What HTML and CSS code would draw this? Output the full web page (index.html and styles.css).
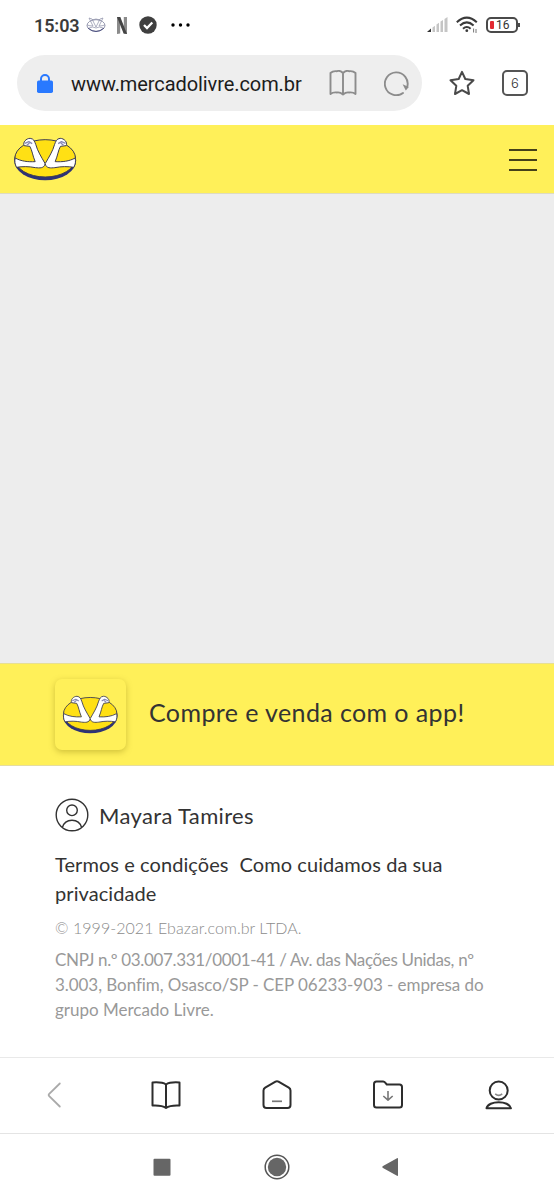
FILE: index.html
```html
<!DOCTYPE html>
<html lang="pt-BR">
<head>
<meta charset="utf-8">
<title>Mercado Livre</title>
<link rel="stylesheet" href="styles.css">
</head>
<body>
<svg class="defs" aria-hidden="true">
  <symbol id="logo" viewBox="40 50 194 132">
    <ellipse cx="136" cy="120" rx="93" ry="60" fill="#2d3277"/>
    <ellipse cx="136" cy="114" rx="91" ry="56" fill="#ffe014" stroke="#3d3c50" stroke-width="3"/>
    <g fill="#fff" stroke="#3d3c50" stroke-width="3" stroke-linejoin="round">
      <path d="M46 113C64 123 84 125 106 124C98 105 97 90 90 78L73 76C68 66 79 54 91 54C102 55 104 63 108 73C113 92 124 109 136 130C133 145 119 143 107 142C87 138 68 138 50 141C45 131 44 124 46 113Z"/>
      <path d="M226 113C208 123 188 125 166 124C174 105 175 90 182 78L199 76C204 66 193 54 181 54C170 55 168 63 164 73C159 92 148 109 136 130C139 145 153 143 165 142C185 138 204 138 222 141C227 131 228 124 226 113Z"/>
      <path d="M75 69L87 64L97 70M81 75L89 68M197 69L185 64L175 70M191 75L183 68" fill="none" stroke="#8587b5" stroke-width="4"/>
    </g>
  </symbol>
</svg>

<header class="status">
  <span class="clock">15:03</span>
  <svg class="mini-logo" viewBox="0 0 20 16" fill="none" stroke="#8a8da6" stroke-width=".9"><ellipse cx="10" cy="8.5" rx="9" ry="5.8"/><path d="M1 8Q4 9 7 9L4 3L3 1L6 2L10 10L14 2L17 1L16 3L13 9Q16 9 19 8M3 11Q7 9 10 11Q13 9 17 11M6 3Q10 1 14 3" stroke-width=".7"/><path d="M2 11Q10 18 18 11" stroke="#4b4f80" stroke-width="1"/></svg>
  <svg class="n-icon" viewBox="0 0 10 17"><path d="M0 0H3.2V16.5L0 17ZM6.8 0H10V17L6.8 16.5Z" fill="#8b8b8b"/><path d="M0 0H3.3L10 17L6.6 16.5Z" fill="#444"/></svg>
  <svg class="check" viewBox="0 0 18 18"><circle cx="9" cy="9" r="8.7" fill="#3f3f3f"/><path d="M5 9L8 12L13.3 6.5" fill="none" stroke="#fff" stroke-width="2.3"/></svg>
  <svg class="dots" viewBox="0 0 20 4"><circle cx="2" cy="2" r="1.7"/><circle cx="9.5" cy="2" r="1.7"/><circle cx="17" cy="2" r="1.7"/></svg>
  <span class="spacer"></span>
  <svg class="signal" viewBox="0 0 21 16"><path d="M0 15L4 11.5V15Z" fill="#333"/><path d="M5.5 10.5L8 8.7V15H5.5ZM9.5 7.6L12 5.8V15H9.5ZM13.5 4.6L16 3V15H13.5ZM17.5 2L20.5 0V15H17.5Z" fill="#c5c5c5"/></svg>
  <svg class="wifi" viewBox="0 0 22 18" fill="none" stroke="#3b3b3b" stroke-width="2"><path d="M.8 6.2Q10.8-3 20.8 6.2M4 9.5Q10.8 3.2 17.6 9.5M7 12.7Q10.8 9.3 14.6 12.7"/><circle cx="10.8" cy="14.7" r="1.4" fill="#3b3b3b" stroke="none"/><path d="M17.6 12.5V16.5M20 13V17" stroke-width="1" stroke="#777"/></svg>
  <span class="battery"><i class="charge"></i>16</span>
</header>

<div class="browser-bar">
  <div class="address">
    <svg class="lock" viewBox="0 0 16 19"><rect y="6.5" width="16" height="12.5" rx="1.7" fill="#2979ff"/><path d="M4 8V5A4 4 0 0 1 12 5V8" fill="none" stroke="#2979ff" stroke-width="2"/></svg>
    <span class="url">www.mercadolivre.com.br</span>
    <svg class="reader" viewBox="0 0 28 26" fill="none" stroke="#8c8c8c" stroke-width="1.9" stroke-linejoin="round"><path d="M14 3Q11 0 8 1.2Q4 .6 1.5 3V24Q4 22 8 22.5Q11 22 14 24.5Q17 22 20 22.5Q24 22 26.5 24V3Q24 .6 20 1.2Q17 0 14 3V24"/></svg>
    <svg class="reload" viewBox="0 0 26 26"><path d="M19 23A11.4 11.4 0 1 1 23.2 17" fill="none" stroke="#8c8c8c" stroke-width="1.9" stroke-linecap="round"/><path d="M18.6 14.2L24.8 17L21.8 20.4Z" fill="#8c8c8c"/></svg>
  </div>
  <svg class="star" viewBox="0 0 26 26"><path d="M13 1.8L16.3 9L24.5 10.2L18.7 15.8L20 24L13 20.2L6 24L7.3 15.8L1.5 10.2L9.7 9Z" fill="none" stroke="#4a4a4a" stroke-width="2" stroke-linejoin="round"/></svg>
  <span class="tabs">6</span>
</div>

<div class="site-header">
  <svg class="brand"><use href="#logo"/></svg>
  <span class="menu"><i></i><i></i><i></i></span>
</div>

<main class="content"></main>

<section class="app-banner">
  <span class="app-tile"><svg class="app-logo"><use href="#logo"/></svg></span>
  <span class="app-text">Compre e venda com o app!</span>
</section>

<footer class="footer">
  <div class="user">
    <svg class="avatar" viewBox="0 0 34 34" fill="none" stroke="#333" stroke-width="1.4"><circle cx="17" cy="17" r="15.8"/><circle cx="17" cy="12.3" r="5.3"/><path d="M7.5 29.3C10 19.8 24 19.8 26.5 29.3"/></svg>
    <span class="user-name">Mayara Tamires</span>
  </div>
  <div class="links">
    <div class="link-row"><span class="terms">Termos e condições</span><span class="care">Como cuidamos da sua</span></div>
    <span class="privacy">privacidade</span>
  </div>
  <div class="copyright"><span>© 1999-2021 Ebazar.com.br LTDA.</span></div>
  <div class="legal">
    <span class="l1">CNPJ n.º 03.007.331/0001-41 / Av. das Nações Unidas, nº</span>
    <span class="l2">3.003, Bonfim, Osasco/SP - CEP 06233-903 - empresa do</span>
    <span class="l3">grupo Mercado Livre.</span>
  </div>
</footer>

<nav class="toolbar">
  <svg viewBox="0 0 32 32"><path d="M20.8 4.5L10 15Q9.2 16 10 17L20.8 27.5" fill="none" stroke="#aaa" stroke-width="1.8" stroke-linecap="round"/></svg>
  <svg viewBox="0 0 32 32" fill="none" stroke="#2d2d2d" stroke-width="2" stroke-linejoin="round"><path d="M16 5.5Q12 2.8 2.5 3.5V26.5Q12 26 16 29Q20 26 29.5 26.5V3.5Q20 2.8 16 5.5V29"/></svg>
  <svg viewBox="0 0 32 32" fill="none" stroke="#2d2d2d" stroke-width="2" stroke-linejoin="round"><path d="M14.5 2.6Q16 1.7 17.5 2.6L27.8 8.7Q29.5 9.8 29.5 11.5V26Q29.5 29 26.5 29H5.5Q2.5 29 2.5 26V11.5Q2.5 9.8 4.2 8.7Z"/><path d="M11 22.3H21" stroke="#777" stroke-width="1.7"/></svg>
  <svg viewBox="0 0 32 32" fill="none" stroke="#2d2d2d" stroke-width="2" stroke-linejoin="round"><path d="M4.5 2.5H11.2Q12.3 2.5 13.2 3.7L14.8 5.5H27.5Q30 5.5 30 8V26Q30 28.5 27.5 28.5H4.5Q2 28.5 2 26V5Q2 2.5 4.5 2.5Z"/><path d="M16 12V21M11.3 17L16 21.2L20.7 17" stroke="#777" stroke-width="1.6"/></svg>
  <svg viewBox="0 0 32 32" fill="none" stroke="#2d2d2d" stroke-width="2" stroke-linejoin="round"><circle cx="15.7" cy="11.5" r="9"/><path d="M3.5 29.3C5.2 21.2 26.2 21.2 27.9 29.3Z"/><path d="M12.2 14.8Q15.7 17.8 19.2 14.8" stroke="#888" stroke-width="1.6"/></svg>
</nav>

<div class="system-nav">
  <svg viewBox="0 0 28 28"><rect x="5.5" y="5.7" width="17" height="17" rx="1" fill="#666"/></svg>
  <svg viewBox="0 0 28 28"><circle cx="14" cy="14" r="11.8" fill="none" stroke="#555" stroke-width="1.5"/><circle cx="14" cy="14" r="9.2" fill="#666"/></svg>
  <svg viewBox="0 0 28 28"><path d="M7 13L21 5.2Q22 4.7 22 5.8V22.2Q22 23.3 21 22.8L7 15Q5.2 14 7 13Z" fill="#666"/></svg>
</div>
</body>
</html>
```
FILE: styles.css
```css
* { box-sizing: border-box; }
body { margin: 0; width: 554px; height: 1200px; overflow: hidden; display: flex; flex-direction: column; background: #fff; color: #333; font-family: Lato, "Open Sans", sans-serif; }
svg { display: block; flex-shrink: 0; }
i { display: block; }
.defs { width: 0; height: 0; position: absolute; }

.status { height: 50px; display: flex; align-items: center; padding: 0 36px 0 34px; font-family: Roboto, sans-serif; }
.clock { font-size: 18px; font-weight: 600; letter-spacing: -.1px; color: #3b3b3b; width: 52px; white-space: nowrap; }
.mini-logo { width: 20px; height: 16px; }
.n-icon { width: 10px; height: 17px; margin-left: 11px; }
.check { width: 18px; height: 18px; margin-left: 12px; }
.dots { width: 20px; height: 4px; margin-left: 14px; }
.spacer { flex: 1; }
.signal { width: 21px; height: 16px; }
.wifi { width: 22px; height: 18px; margin-left: 8px; }
.battery { position: relative; width: 32px; height: 16px; margin-left: 8px; display: flex; align-items: center; gap: 2px; padding-left: 2px; border: 2px solid #4a4a4a; border-radius: 5px; font-size: 12px; line-height: 12px; color: #333; }
.battery::after { content: ""; position: absolute; right: -4px; top: 4px; width: 2px; height: 4px; background: #4a4a4a; }
.charge { width: 4px; height: 8px; border-radius: 1px; background: #e32930; }

.browser-bar { height: 75px; display: flex; align-items: center; padding: 0 26px 9px 17px; }
.address { width: 405px; height: 56px; border-radius: 28px; background: #eee; display: flex; align-items: center; padding-left: 20px; }
.lock { width: 16px; height: 19px; }
.url { width: 258px; margin-left: 18px; font: 20px/26px Roboto, sans-serif; letter-spacing: -.08px; color: #1c1c1c; padding-top: 2px; }
.reader { width: 28px; height: 26px; }
.reload { width: 26px; height: 26px; margin-left: 27px; }
.star { width: 26px; height: 26px; margin-left: 27px; }
.tabs { width: 26px; height: 26px; margin-left: 27px; border: 2px solid #555; border-radius: 5px; font: 300 13px/22px Inter, sans-serif; text-align: center; }

.site-header { height: 69px; background: #fff059; border-bottom: 1px solid #dedbc0; display: flex; justify-content: space-between; align-items: flex-start; padding: 12px 17px 0 13px; }
.brand { width: 65px; height: 44px; }
.menu { width: 28px; display: flex; flex-direction: column; gap: 8px; padding-top: 12px; }
.menu i { height: 2px; background: #454119; }
.content { height: 469px; background: #ededed; }

.app-banner { height: 103px; background: #fff059; border-top: 1px solid #e7df94; border-bottom: 1px solid #e5dda0; display: flex; align-items: center; padding-left: 55px; }
.app-tile { width: 71px; height: 71px; border-radius: 7px; background: #fff059; box-shadow: 0 2px 6px rgba(120, 105, 0, .35); display: flex; align-items: center; justify-content: center; }
.app-logo { width: 57px; height: 39px; }
.app-text { margin-left: 23px; font-size: 25px; line-height: 32px; letter-spacing: .4px; white-space: nowrap; padding-bottom: 5px; }

.footer { height: 291px; padding: 31px 55px 0; white-space: nowrap; }
.user { display: flex; align-items: center; height: 36px; }
.avatar { width: 34px; height: 34px; }
.user-name { margin-left: 10px; font-size: 22px; line-height: 30px; letter-spacing: .35px; padding-top: 1px; }
.links { margin-top: 17px; font-size: 20px; line-height: 29px; letter-spacing: .07px; }
.link-row { display: flex; gap: 11px; }
.copyright { margin-top: 8px; font-size: 16px; line-height: 24px; letter-spacing: .05px; color: #8c8c8c; font-weight: 300; }
.legal { margin-top: 7px; display: flex; flex-direction: column; align-items: flex-start; font-size: 17px; line-height: 25px; color: #999; }
.l1 { letter-spacing: -.34px; }
.l2 { letter-spacing: -.06px; }

.toolbar { height: 77px; border-top: 1px solid #e9e9e9; border-bottom: 1px solid #e4e4e4; display: grid; grid-template-columns: repeat(5, 1fr); justify-items: center; padding-top: 21px; }
.toolbar svg { width: 32px; height: 32px; }
.system-nav { flex: 1; display: flex; gap: 87px; padding: 19px 0 0 148px; }
.system-nav svg { width: 28px; height: 28px; }
.system-nav svg:last-child { margin-left: -2px; }
```
